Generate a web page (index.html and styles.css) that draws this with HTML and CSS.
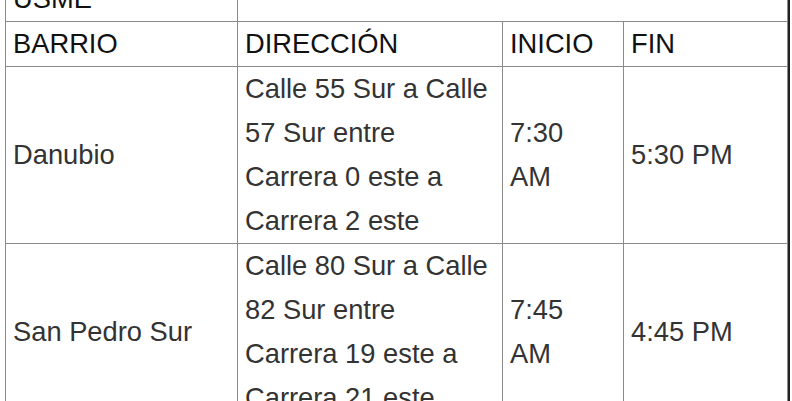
FILE: index.html
```html
<!DOCTYPE html>
<html lang="es">
<head>
<meta charset="utf-8">
<title>Cierres USME</title>
<link rel="stylesheet" href="styles.css">
</head>
<body>
<table class="schedule">
  <colgroup>
    <col class="col-barrio">
    <col class="col-dir">
    <col class="col-inicio">
    <col class="col-fin">
  </colgroup>
  <tbody>
    <tr class="locality">
      <td>USME</td>
      <td colspan="3"></td>
    </tr>
    <tr class="head">
      <td>BARRIO</td>
      <td>DIRECCIÓN</td>
      <td class="start">INICIO</td>
      <td>FIN</td>
    </tr>
    <tr>
      <td>Danubio</td>
      <td>Calle 55 Sur a Calle 57 Sur entre Carrera 0 este a Carrera 2 este</td>
      <td class="start">7:30 AM</td>
      <td>5:30 PM</td>
    </tr>
    <tr>
      <td>San Pedro Sur</td>
      <td>Calle 80 Sur a Calle 82 Sur entre Carrera 19 este a Carrera 21 este</td>
      <td class="start">7:45 AM</td>
      <td>4:45 PM</td>
    </tr>
  </tbody>
</table>
</body>
</html>
```
FILE: styles.css
```css
html, body {
  margin: 0;
  padding: 0;
  background: #ffffff;
  overflow: hidden;
}

.schedule {
  margin: -24px 0 0 5px;
  border-collapse: collapse;
  table-layout: fixed;
  width: 782px;
  font-family: "Liberation Sans", Arial, sans-serif;
  font-size: 27.3px;
  line-height: 44px;
  color: #333333;
  box-shadow: 2px 0 0 #222;
}

.col-barrio { width: 232px; }
.col-dir { width: 265px; }
.col-inicio { width: 121px; }
.col-fin { width: 164px; }

.schedule td {
  border: 1px solid #8a8a8a;
  padding: 0 12px 0 7px;
  vertical-align: middle;
  text-align: left;
}

.schedule td.start {
  padding-right: 16px;
}

.locality td,
.head td {
  color: #111111;
}
```
